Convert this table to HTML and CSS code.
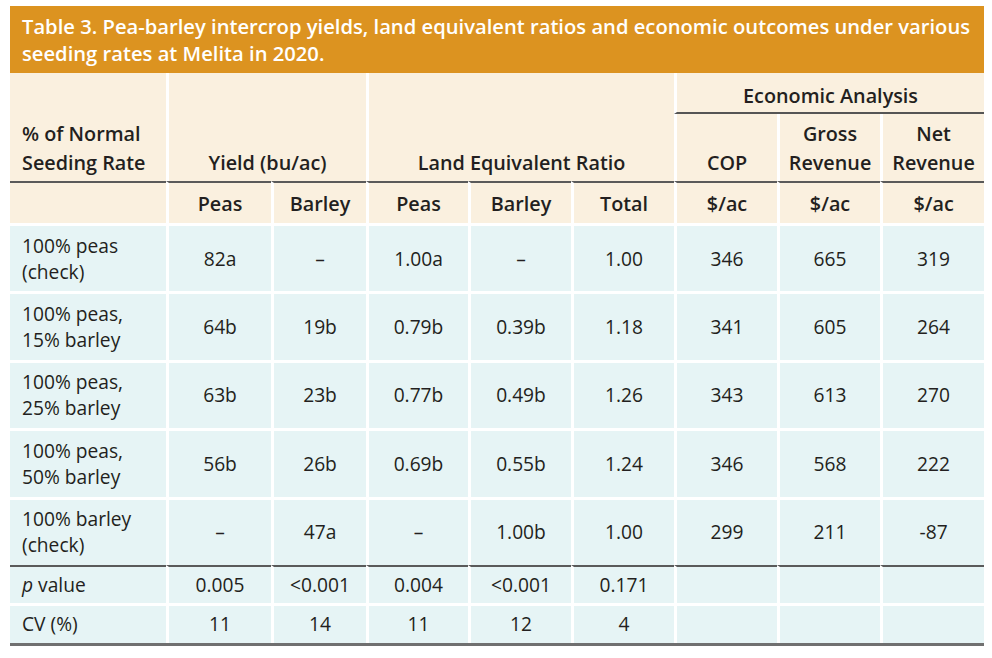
FILE: index.html
```html
<!DOCTYPE html>
<html lang="en">
<head>
<meta charset="utf-8">
<title>Table 3</title>
<link rel="stylesheet" href="styles.css">
</head>
<body>
<div class="page">
  <div class="card">
    <div class="title">Table 3. Pea-barley intercrop yields, land equivalent ratios and economic outcomes under various<br>seeding rates at Melita in 2020.</div>
    <table class="tbl">
      <colgroup>
        <col class="w1"><col class="w2"><col class="w3"><col class="w4"><col class="w5"><col class="w6"><col class="w7"><col class="w8"><col class="w9">
      </colgroup>
      <thead>
        <tr class="hA">
          <th rowspan="2" class="first lbl bot">% of Normal<br>Seeding Rate</th>
          <th rowspan="2" colspan="2" class="bot">Yield (bu/ac)</th>
          <th rowspan="2" colspan="3" class="bot">Land Equivalent Ratio</th>
          <th colspan="3" class="econ">Economic Analysis</th>
        </tr>
        <tr class="hB">
          <th class="bot">COP</th>
          <th class="bot">Gross<br>Revenue</th>
          <th class="bot">Net<br>Revenue</th>
        </tr>
        <tr class="hC">
          <th class="first"></th>
          <th>Peas</th><th>Barley</th><th>Peas</th><th>Barley</th><th>Total</th><th>$/ac</th><th>$/ac</th><th>$/ac</th>
        </tr>
      </thead>
      <tbody>
        <tr class="data">
          <td class="first lbl">100% peas<br>(check)</td><td>82a</td><td>–</td><td>1.00a</td><td>–</td><td>1.00</td><td>346</td><td>665</td><td>319</td>
        </tr>
        <tr class="data">
          <td class="first lbl">100% peas,<br>15% barley</td><td>64b</td><td>19b</td><td>0.79b</td><td>0.39b</td><td>1.18</td><td>341</td><td>605</td><td>264</td>
        </tr>
        <tr class="data">
          <td class="first lbl">100% peas,<br>25% barley</td><td>63b</td><td>23b</td><td>0.77b</td><td>0.49b</td><td>1.26</td><td>343</td><td>613</td><td>270</td>
        </tr>
        <tr class="data">
          <td class="first lbl">100% peas,<br>50% barley</td><td>56b</td><td>26b</td><td>0.69b</td><td>0.55b</td><td>1.24</td><td>346</td><td>568</td><td>222</td>
        </tr>
        <tr class="data">
          <td class="first lbl">100% barley<br>(check)</td><td>–</td><td>47a</td><td>–</td><td>1.00b</td><td>1.00</td><td>299</td><td>211</td><td>-87</td>
        </tr>
        <tr class="stat pv">
          <td class="first lbl"><i>p</i> value</td><td>0.005</td><td>&lt;0.001</td><td>0.004</td><td>&lt;0.001</td><td>0.171</td><td></td><td></td><td></td>
        </tr>
        <tr class="stat cv">
          <td class="first lbl">CV (%)</td><td>11</td><td>14</td><td>11</td><td>12</td><td>4</td><td></td><td></td><td></td>
        </tr>
      </tbody>
    </table>
  </div>
</div>
</body>
</html>
```

FILE: styles.css
```css
* { box-sizing: border-box; }

html, body {
  margin: 0;
  padding: 0;
  background: #ffffff;
}

body {
  font-family: "Open Sans", "Noto Sans", "Liberation Sans", sans-serif;
  color: #231f20;
}

.page {
  padding: 6px 8px 0 10px;
}

.card {
  width: 974px;
}

.title {
  height: 67px;
  background: #dc9320;
  color: #ffffff;
  font-size: 20.2px;
  font-weight: 600;
  line-height: 27px;
  padding: 7px 0 0 12px;
  white-space: nowrap;
}

.tbl {
  width: 974px;
  table-layout: fixed;
  border-collapse: separate;
  border-spacing: 0;
  border-bottom: 3px solid #707070;
}

.w1 { width: 156px; }
.w2 { width: 105px; }
.w3 { width: 95px; }
.w4 { width: 102px; }
.w5 { width: 103px; }
.w6 { width: 103px; }
.w7 { width: 103px; }
.w8 { width: 103px; }
.w9 { width: 104px; }

.tbl th,
.tbl td {
  padding: 0;
  border-left: 3px solid #ffffff;
  text-align: center;
  vertical-align: middle;
}

.tbl .first {
  border-left: 0;
}

.tbl .lbl {
  text-align: left;
  padding-left: 12px;
}

.tbl th {
  background: #faf0df;
  font-weight: 600;
  font-size: 19.8px;
  line-height: 29px;
  white-space: nowrap;
}

.tbl th.bot {
  vertical-align: bottom;
  padding-bottom: 4px;
}

.hA { height: 41px; }

.tbl th.econ {
  vertical-align: bottom;
  padding-bottom: 2px;
  border-bottom: 2px solid #555555;
}

.hB { height: 67px; }

.hC { height: 42px; }
.tbl .hC th {
  border-top: 2px solid #5a5a5a;
}

.tbl td {
  background: #e6f4f5;
  line-height: 26px;
  font-size: 19.2px;
}

.data { height: 68.4px; }
.tbl .data td {
  border-top: 3px solid #ffffff;
}

.pv { height: 38px; }
.tbl .pv td {
  border-top: 2px solid #5a5a5a;
}

.cv { height: 40px; }
.tbl .cv td {
  border-top: 3px solid #ffffff;
}
```
